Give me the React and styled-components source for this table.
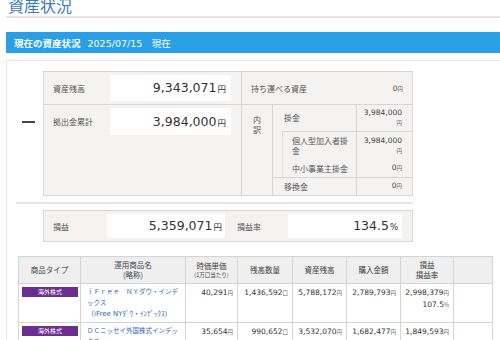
import React from 'react';
import styled, { createGlobalStyle } from 'styled-components';

const GlobalStyle = createGlobalStyle`
  html, body {
    margin: 0;
    padding: 0;
    overflow: hidden;
    background: #fff;
  }
  body {
    font-family: "DejaVu Sans", "Noto Sans CJK JP", sans-serif;
    color: #333;
  }
`

const Page = styled.div`
  width: 500px;
  height: 340px;
  overflow: hidden;
  padding-left: 6px;
  box-sizing: border-box;
`

const PageTitle = styled.h1`
  margin: -5px 0 0;
  padding: 0 0 1px 2px;
  font-family: "Noto Sans CJK JP", sans-serif;
  font-size: 16px;
  line-height: 20px;
  font-weight: 400;
  color: #3a7bbf;
  border-bottom: 2px solid #e4e4e4;
  width: 520px;
`

const StatusBar = styled.div`
  margin-top: 14px;
  height: 21px;
  width: 520px;
  background: #2b9fe5;
  color: #fff;
  display: flex;
  align-items: center;
  gap: 7px;
  padding-left: 8px;
  font-size: 9.5px;
`

const StatusTitle = styled.span`
  font-weight: 700;
`

const StatusDate = styled.span`
  font-size: 9.5px;
`

const Panel = styled.div`
  margin-top: 7px;
  width: 520px;
  border: 1px solid #e6e6e6;
  box-sizing: border-box;
  padding: 10px 0 0 9px;
  height: 300px;
`

const Section = styled.div`
  display: flex;
`

const DashCol = styled.div`
  width: 27px;
  flex: none;
`

const Dash = styled.span`
  display: block;
  width: 13px;
  height: 2px;
  background: #444;
  margin: 50px 0 0 6px;
`

const SummaryTable = styled.div`
  display: flex;
  width: 370px;
  box-sizing: border-box;
  border: 1px solid #d6d6d6;
  background: #f4f3f1;
`

const Half = styled.div`
  display: flex;
  flex-direction: column;
  width: ${p => p.$width ? `${p.$width}px` : 'auto'};
  flex: ${p => p.$width ? 'none' : '1'};
  border-right: ${p => p.$divider ? '1px solid #d6d6d6' : 'none'};
`

const FieldRow = styled.div`
  display: flex;
  align-items: ${p => p.$first ? 'center' : 'flex-start'};
  height: ${p => p.$first ? '32px' : 'auto'};
  flex: ${p => p.$first ? 'none' : '1'};
  border-top: ${p => p.$first ? 'none' : '1px solid #d6d6d6'};
  padding-top: ${p => p.$first ? '0' : '3px'};
`

const FieldInner = styled.div`
  display: flex;
  align-items: center;
`

const Label = styled.div`
  width: ${p => p.$width || 66}px;
  flex: none;
  padding-left: ${p => p.$indent ?? 9}px;
  box-sizing: border-box;
  font-family: "Noto Sans CJK JP", sans-serif;
  font-size: 8px;
  color: #555;
`

const ValueBox = styled.div`
  width: ${p => p.$width}px;
  height: ${p => p.$height || 26}px;
  line-height: ${p => p.$height || 26}px;
  flex: none;
  background: #fff;
  text-align: right;
  box-sizing: border-box;
  padding-right: ${p => p.$pad || 5}px;
  font-size: 12.5px;
  color: #333;
  white-space: nowrap;
`

const BigUnit = styled.span`
  font-size: 8.5px;
  margin-left: 1px;
`

const PortableRow = styled.div`
  height: 32px;
  display: flex;
  align-items: center;
  justify-content: space-between;
  padding: 0 9px;
  font-size: 7.5px;
`

const SmallNum = styled.span`
  font-size: 7.5px;
  color: #444;
`

const SmallUnit = styled.span`
  font-size: 5.5px;
  color: #666;
  display: ${p => p.$block ? 'block' : 'inline'};
`

const Breakdown = styled.div`
  flex: 1;
  display: flex;
  border-top: 1px solid #d6d6d6;
`

const BreakdownHead = styled.div`
  width: 30px;
  flex: none;
  border-right: 1px solid #d6d6d6;
  padding-top: 10px;
  text-align: center;
  font-family: "Noto Sans CJK JP", sans-serif;
  font-size: 8px;
  line-height: 10px;
  color: #555;
`

const BreakdownBody = styled.div`
  flex: 1;
  display: flex;
  flex-direction: column;
`

const SubBlock = styled.div`
  margin-left: 9px;
  border-left: 1px solid #dcdcdc;
  border-top: 1px solid #d6d6d6;
`

const BreakRow = styled.div`
  display: flex;
  align-items: center;
  border-top: ${p => p.$line ? '1px solid #d6d6d6' : 'none'};
`

const BreakLabel = styled.div`
  flex: 1;
  padding-left: ${p => p.$indent}px;
  padding-right: 6px;
  font-family: "Noto Sans CJK JP", sans-serif;
  font-size: 8px;
  line-height: 10px;
  color: #555;
`

const BreakValue = styled.div`
  width: 56px;
  flex: none;
  align-self: stretch;
  box-sizing: border-box;
  border-left: 1px solid #d6d6d6;
  padding: ${p => p.$pad};
  padding-right: 10px;
  text-align: right;
  font-size: 7.5px;
  line-height: 10px;
`

const Separator = styled.div`
  width: 397px;
  height: 2px;
  background: #e6e6e6;
  margin-top: 6px;
`

const ProfitTable = styled.div`
  margin: 6px 0 0 27px;
  width: 370px;
  height: 32px;
  box-sizing: border-box;
  border: 1px solid #d6d6d6;
  background: #f4f3f1;
  display: flex;
  align-items: center;
`

const Holdings = styled.table`
  margin: 14px 0 0 2px;
  width: 474px;
  table-layout: fixed;
  border-collapse: collapse;
`

const HeadCell = styled.th`
  background: #efefef;
  border: 1px solid #d4d4d4;
  height: 26px;
  padding: 0;
  font-family: "Noto Sans CJK JP", sans-serif;
  font-size: 7.5px;
  line-height: 10px;
  font-weight: 400;
  color: #444;
  text-align: center;
`

const HeadNote = styled.span`
  display: block;
  font-size: 5.5px;
  line-height: 8px;
`

const Cell = styled.td`
  border: 1px solid #d4d4d4;
  vertical-align: top;
  padding: ${p => p.$name ? '3px 3px 2px 6px' : '3px 4px 2px 2px'};
  font-size: ${p => p.$name ? '6.5px' : '7.5px'};
  line-height: 11px;
  text-align: ${p => p.$num ? 'right' : 'left'};
  color: ${p => p.$name ? '#3165b5' : '#333'};
  line-break: loose;
  white-space: ${p => p.$num ? 'nowrap' : 'normal'};
`

const ShortName = styled.span`
  font-size: 7px;
  white-space: nowrap;
`

const TypeBadge = styled.span`
  display: block;
  width: 56px;
  height: 10px;
  margin-left: 1px;
  line-height: 10px;
  background: #6b2d90;
  color: #fff;
  font-family: "Noto Sans CJK JP", sans-serif;
  font-size: 6px;
  text-align: center;
`

const Unit = styled.span`
  font-family: "Noto Sans CJK JP", sans-serif;
  font-size: 5.5px;
  color: #666;
`

const columns = [62, 105, 52, 55, 54, 54, 53, 39]

const holdings = [
  {
    type: '海外株式',
    name: 'ｉＦｒｅｅ　ＮＹダウ・インデックス',
    short: '（iFree NYﾀﾞｳ・ｲﾝﾃﾞｯｸｽ)',
    price: '40,291',
    qty: '1,436,592',
    value: '5,788,172',
    cost: '2,789,793',
    profit: '2,998,379',
    rate: '107.5',
  },
  {
    type: '海外株式',
    name: 'ＤＣニッセイ外国株式インデックス',
    short: '（DCﾆｯｾｲ外国株式ｲﾝﾃﾞｯｸｽ)',
    price: '35,654',
    qty: '990,652',
    value: '3,532,070',
    cost: '1,682,477',
    profit: '1,849,593',
    rate: '110.0',
  },
]

const Yen = ({ children }) => <>{children}<Unit>円</Unit></>

const App = () => {
  return (
    <>
      <GlobalStyle />
      <Page>
        <PageTitle>資産状況</PageTitle>
        <StatusBar>
          <StatusTitle>現在の資産状況</StatusTitle>
          <StatusDate>2025/07/15　現在</StatusDate>
        </StatusBar>
        <Panel>
          <Section>
            <DashCol><Dash /></DashCol>
            <SummaryTable>
              <Half $width={197} $divider>
                <FieldRow $first>
                  <Label>資産残高</Label>
                  <ValueBox $width={121}>9,343,071<BigUnit>円</BigUnit></ValueBox>
                </FieldRow>
                <FieldRow>
                  <FieldInner>
                    <Label>拠出金累計</Label>
                    <ValueBox $width={121} $height={27}>3,984,000<BigUnit>円</BigUnit></ValueBox>
                  </FieldInner>
                </FieldRow>
              </Half>
              <Half>
                <PortableRow>
                  <Label as="span" $indent={0} $width={100}>持ち運べる資産</Label>
                  <span><SmallNum>0</SmallNum><SmallUnit>円</SmallUnit></span>
                </PortableRow>
                <Breakdown>
                  <BreakdownHead>内<br />訳</BreakdownHead>
                  <BreakdownBody>
                    <BreakRow>
                      <BreakLabel $indent={11}>掛金</BreakLabel>
                      <BreakValue $pad="3px 0 3px">
                        <SmallNum>3,984,000</SmallNum>
                        <SmallUnit $block>円</SmallUnit>
                      </BreakValue>
                    </BreakRow>
                    <SubBlock>
                      <BreakRow>
                        <BreakLabel $indent={9}>個人型加入者掛金</BreakLabel>
                        <BreakValue $pad="4px 0 4px">
                          <SmallNum>3,984,000</SmallNum>
                          <SmallUnit $block>円</SmallUnit>
                        </BreakValue>
                      </BreakRow>
                      <BreakRow>
                        <BreakLabel $indent={9}>中小事業主掛金</BreakLabel>
                        <BreakValue $pad="3px 0 4px">
                          <SmallNum>0</SmallNum><SmallUnit>円</SmallUnit>
                        </BreakValue>
                      </BreakRow>
                    </SubBlock>
                    <BreakRow $line>
                      <BreakLabel $indent={11}>移換金</BreakLabel>
                      <BreakValue $pad="3px 0 4px">
                        <SmallNum>0</SmallNum><SmallUnit>円</SmallUnit>
                      </BreakValue>
                    </BreakRow>
                  </BreakdownBody>
                </Breakdown>
              </Half>
            </SummaryTable>
          </Section>
          <Separator />
          <ProfitTable>
            <Label $width={63}>損益</Label>
            <ValueBox $width={118} $height={24} $pad={3}>5,359,071<BigUnit>円</BigUnit></ValueBox>
            <Label $width={63} $indent={12}>損益率</Label>
            <ValueBox $width={114} $height={24} $pad={4}>134.5<BigUnit>%</BigUnit></ValueBox>
          </ProfitTable>
          <Holdings>
            <colgroup>
              {columns.map((w, i) => <col key={i} style={{ width: w }} />)}
            </colgroup>
            <thead>
              <tr>
                <HeadCell>商品タイプ</HeadCell>
                <HeadCell>運用商品名<br />(略称)</HeadCell>
                <HeadCell>時価単価<HeadNote>(1万口当たり)</HeadNote></HeadCell>
                <HeadCell>残高数量</HeadCell>
                <HeadCell>資産残高</HeadCell>
                <HeadCell>購入金額</HeadCell>
                <HeadCell>損益<br />損益率</HeadCell>
                <HeadCell />
              </tr>
            </thead>
            <tbody>
              {holdings.map(h => (
                <tr key={h.name}>
                  <Cell><TypeBadge>{h.type}</TypeBadge></Cell>
                  <Cell $name>{h.name}<br /><ShortName>{h.short}</ShortName></Cell>
                  <Cell $num><Yen>{h.price}</Yen></Cell>
                  <Cell $num>{h.qty}<Unit>口</Unit></Cell>
                  <Cell $num><Yen>{h.value}</Yen></Cell>
                  <Cell $num><Yen>{h.cost}</Yen></Cell>
                  <Cell $num><Yen>{h.profit}</Yen><br />{h.rate}<Unit>%</Unit></Cell>
                  <Cell />
                </tr>
              ))}
            </tbody>
          </Holdings>
        </Panel>
      </Page>
    </>
  );
}

export default App;
